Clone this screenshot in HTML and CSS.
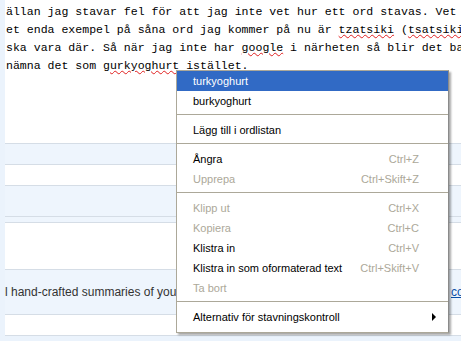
FILE: index.html
```html
<!DOCTYPE html>
<html lang="sv">
<head>
<meta charset="utf-8">
<link rel="stylesheet" href="styles.css">
</head>
<body>
<div class="page">
  <div class="editor">
    <div class="line">ällan jag stavar fel för att jag inte vet hur ett ord stavas. Vet</div>
    <div class="line">et enda exempel på såna ord jag kommer på nu är <span class="err">tzatsiki</span> (<span class="err">tsatsiki</span>)</div>
    <div class="line">ska vara där. Så när jag inte har <span class="err">google</span> i närheten så blir det bara</div>
    <div class="line">nämna det som <span class="err">gurkyoghurt</span> istället.</div>
  </div>
  <div class="row alt h20"></div>
  <div class="row h20"></div>
  <div class="row alt h30"></div>
  <div class="row alt h5"></div>
  <div class="row h46"></div>
  <div class="row alt h44 summary"><span class="stext">l hand-crafted summaries of your favourite feeds</span><span class="slink">content</span></div>
  <div class="row h20"></div>
</div>

<div class="menu">
  <div class="item active"><span>turkyoghurt</span></div>
  <div class="item"><span>burkyoghurt</span></div>
  <div class="sep"></div>
  <div class="item"><span>Lägg till i ordlistan</span></div>
  <div class="sep"></div>
  <div class="item"><span>Ångra</span><span class="key">Ctrl+Z</span></div>
  <div class="item off"><span>Upprepa</span><span class="key">Ctrl+Skift+Z</span></div>
  <div class="sep"></div>
  <div class="item off"><span>Klipp ut</span><span class="key">Ctrl+X</span></div>
  <div class="item off"><span>Kopiera</span><span class="key">Ctrl+C</span></div>
  <div class="item"><span>Klistra in</span><span class="key">Ctrl+V</span></div>
  <div class="item"><span>Klistra in som oformaterad text</span><span class="key">Ctrl+Skift+V</span></div>
  <div class="item off"><span>Ta bort</span></div>
  <div class="sep"></div>
  <div class="item"><span>Alternativ för stavningskontroll</span><span class="arrow"></span></div>
</div>
</body>
</html>
```

FILE: styles.css
```css
html, body {
  margin: 0;
  padding: 0;
}
body {
  width: 461px;
  height: 341px;
  overflow: hidden;
  background: #ebf3fc;
  position: relative;
}
.page {
  padding-left: 5px;
  display: flex;
  flex-direction: column;
}
.editor {
  background: #ffffff;
  height: 140px;
  padding: 3px 0 0 1px;
  border-bottom: 1px solid #d5dde6;
  overflow: hidden;
  font-family: "Liberation Mono", "Courier New", monospace;
  font-size: 11.55px;
  line-height: 18px;
  color: #000;
  white-space: nowrap;
}
.err {
  text-decoration: underline wavy #e02020;
  text-decoration-thickness: 1px;
  text-underline-offset: 1px;
}
.row {
  background: #ffffff;
  border-bottom: 1px solid #d5dde6;
}
.row.alt {
  background: #eef5fd;
}
.h20 { height: 20px; }
.h30 { height: 30px; }
.h5 { height: 5px; }
.h46 { height: 46px; }
.h44 { height: 44px; }
.summary {
  display: flex;
  align-items: center;
  font-family: "Liberation Sans", Arial, sans-serif;
  font-size: 12px;
  color: #333;
  white-space: nowrap;
}
.stext {
  flex: 1;
  overflow: hidden;
}
.slink {
  width: 10px;
  overflow: hidden;
  color: #0a4fa8;
  text-decoration: underline;
}
.menu {
  position: absolute;
  left: 176px;
  top: 70px;
  width: 271px;
  padding-bottom: 5px;
  background: #ffffff;
  border: 1px solid #aca899;
  border-right-color: #8a8a8a;
  box-shadow: 2px 2px 2px rgba(0, 0, 0, 0.35);
  font-family: "Liberation Sans", Arial, sans-serif;
  font-size: 11px;
  color: #000;
}
.item {
  height: 20px;
  display: flex;
  align-items: center;
  justify-content: space-between;
  padding: 0 29px 0 16px;
  white-space: nowrap;
}
.item.active {
  background: #316ac5;
  color: #fff;
}
.item.off {
  color: #aca899;
}
.key {
  color: #aca899;
}
.item .arrow {
  width: 0;
  height: 0;
  border-top: 4px solid transparent;
  border-bottom: 4px solid transparent;
  border-left: 4px solid #000;
  margin-right: -17px;
}
.sep {
  height: 1px;
  margin: 3px 0 4px;
  background: #aca899;
  border-bottom: 1px solid #fff;
}
```
